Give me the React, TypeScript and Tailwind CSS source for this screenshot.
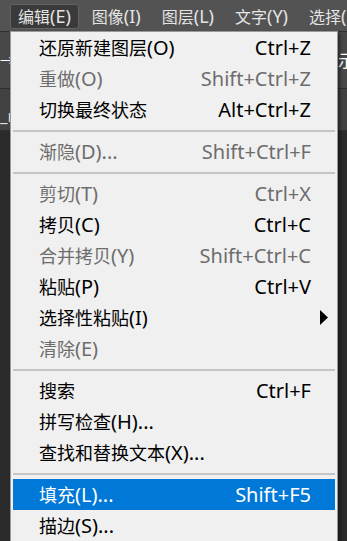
import React from "react";

type Item =
  | { label: string; shortcut?: string; disabled?: boolean; submenu?: boolean; active?: boolean }
  | "sep";

const menus = ["编辑(E)", "图像(I)", "图层(L)", "文字(Y)", "选择(S)"];

const items: Item[] = [
  { label: "还原新建图层(O)", shortcut: "Ctrl+Z" },
  { label: "重做(O)", shortcut: "Shift+Ctrl+Z", disabled: true },
  { label: "切换最终状态", shortcut: "Alt+Ctrl+Z" },
  "sep",
  { label: "渐隐(D)...", shortcut: "Shift+Ctrl+F", disabled: true },
  "sep",
  { label: "剪切(T)", shortcut: "Ctrl+X", disabled: true },
  { label: "拷贝(C)", shortcut: "Ctrl+C" },
  { label: "合并拷贝(Y)", shortcut: "Shift+Ctrl+C", disabled: true },
  { label: "粘贴(P)", shortcut: "Ctrl+V" },
  { label: "选择性粘贴(I)", submenu: true },
  { label: "清除(E)", disabled: true },
  "sep",
  { label: "搜索", shortcut: "Ctrl+F" },
  { label: "拼写检查(H)..." },
  { label: "查找和替换文本(X)..." },
  "sep",
  { label: "填充(L)...", shortcut: "Shift+F5", active: true },
  { label: "描边(S)..." },
];

// chinese part and the ascii tail "(X)..." are drawn at different sizes,
// the latin glyphs in the original look bigger than the cjk ones
const split = (text: string) => {
  const m = text.match(/^([^\x00-\x7f]*)(.*)$/);
  return m ? [m[1], m[2]] : [text, ""];
};

const App = () => {
  return (
    <div className="relative w-[347px] h-[541px] overflow-hidden bg-[#2b2b2b] font-['Noto_Sans','Noto_Sans_CJK_SC',sans-serif]">
      {/* menu bar */}
      <div className="flex h-[31px] pl-[10px] gap-[5px] pt-[4px] bg-[#535353] text-[16px] text-[#e4e4e4] whitespace-nowrap">
        {menus.map((m, i) => {
          const [cjk, latin] = split(m);
          return (
            <div
              key={m}
              className={
                i === 0
                  ? "h-[25px] px-[7px] flex items-center rounded-[3px] bg-[#3a3a3a] border border-[#636363]"
                  : "h-[25px] px-[8px] flex items-center"
              }
            >
              {cjk}
              <span className="text-[18px]">{latin}</span>
            </div>
          );
        })}
      </div>

      {/* options bar behind the menu */}
      <div className="flex items-center justify-between h-[58px] bg-[#484848] border-t border-b border-[#2f2f2f] text-white">
        <span className="text-[14px] leading-none">→</span>
        <span className="text-[17px] leading-none mr-[-8px]">示</span>
      </div>

      {/* document tab bar */}
      <div className="flex items-end h-[42px] bg-[#424242] border-b border-[#2f2f2f] text-[#e0e0e0] text-[17px] pb-[6px]">
        <span className="leading-none">_n</span>
      </div>

      {/* edit dropdown */}
      <div className="absolute left-[10px] top-[31px] w-[328px] bg-[#f0f0f0] border border-[#9a9a9a] shadow-[2px_2px_3px_rgba(0,0,0,0.45)] px-[2px] text-[18px] whitespace-nowrap">
        {items.map((item, i) => {
          if (item === "sep") {
            return (
              <div key={i} className="h-[11px] flex items-center">
                <div className="w-full h-[2px] bg-[#c5c5c5]" />
              </div>
            );
          }
          const [cjk, latin] = split(item.label);
          return (
            <div
              key={i}
              className={
                "h-[31px] flex items-center pl-[26px] " +
                (item.active
                  ? "bg-[#0078d7] text-white"
                  : item.disabled
                    ? "text-[#6d6d6d]"
                    : "text-black")
              }
            >
              <span className="flex-1">
                {cjk}
                <span className="text-[20px]">{latin}</span>
              </span>
              <span className="text-[20px]">{item.shortcut}</span>
              <span className="w-[24px] flex items-center pl-[9px]">
                {item.submenu && (
                  <svg width="8" height="15" viewBox="0 0 8 15">
                    <path d="M0 0 L8 7.5 L0 15 Z" fill="#000" />
                  </svg>
                )}
              </span>
            </div>
          );
        })}
      </div>
    </div>
  );
};

export default App;
